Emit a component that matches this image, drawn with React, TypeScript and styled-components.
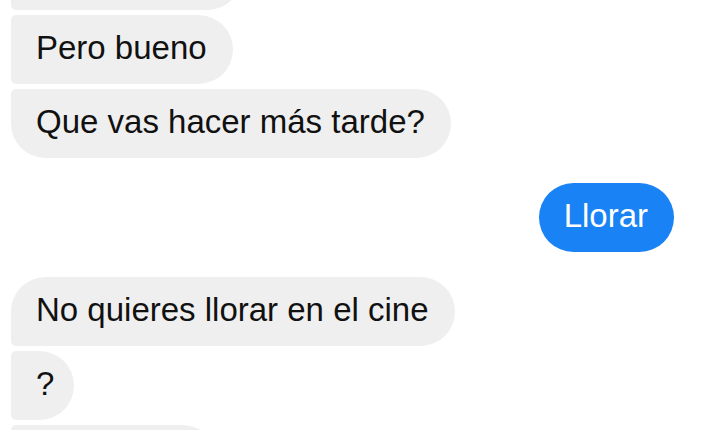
import React from "react";
import styled, { createGlobalStyle } from "styled-components";

const Global = createGlobalStyle`
  html, body { margin: 0; padding: 0; background: #ffffff; }
  body { font-family: "Liberation Sans", Arial, sans-serif; }
`;

const Screen = styled.div`
  width: 720px;
  height: 430px;
  overflow: hidden;
  background: #ffffff;
`;

const Thread = styled.div`
  display: flex;
  flex-direction: column;
  margin-top: -59px;
  padding: 0 46px 0 11px;
`;

const Group = styled.div<{ $mine?: boolean }>`
  display: flex;
  flex-direction: column;
  align-items: ${(p) => (p.$mine ? "flex-end" : "flex-start")};
  gap: 5px;
  margin-bottom: 25px;
  &:last-child { margin-bottom: 0; }
`;

const Bubble = styled.div<{
  $mine?: boolean;
  $tight?: boolean;
  $pos?: "first" | "middle" | "last" | "single";
}>`
  box-sizing: border-box;
  height: 69px;
  padding: 13px ${(p) => (p.$tight ? "20px" : "26px")} 17px 25px;
  font-size: 33px;
  line-height: 39px;
  white-space: nowrap;
  color: ${(p) => (p.$mine ? "#ffffff" : "#111111")};
  background: ${(p) => (p.$mine ? "#1982f4" : "#efefef")};
  border-radius: ${(p) => {
    if (p.$mine) return "35px";
    switch (p.$pos) {
      case "first":
        return "35px 35px 35px 5px";
      case "last":
        return "5px 35px 35px 35px";
      case "middle":
        return "5px 35px 35px 5px";
      default:
        return "35px";
    }
  }};
`;

const Spacer = styled.span`
  display: inline-block;
`;

export default function App() {
  return (
    <>
      <Global />
      <Screen>
        <Thread>
          <Group>
            <Bubble $pos="middle">
              <Spacer style={{ width: 180 }} />
            </Bubble>
            <Bubble $pos="middle">Pero bueno</Bubble>
            <Bubble $pos="last">Que vas hacer más tarde?</Bubble>
          </Group>
          <Group $mine>
            <Bubble $mine>Llorar</Bubble>
          </Group>
          <Group>
            <Bubble $pos="first">No quieres llorar en el cine</Bubble>
            <Bubble $pos="middle" $tight>
              ?
            </Bubble>
            <Bubble $pos="middle">
              <Spacer style={{ width: 155 }} />
            </Bubble>
          </Group>
        </Thread>
      </Screen>
    </>
  );
}
